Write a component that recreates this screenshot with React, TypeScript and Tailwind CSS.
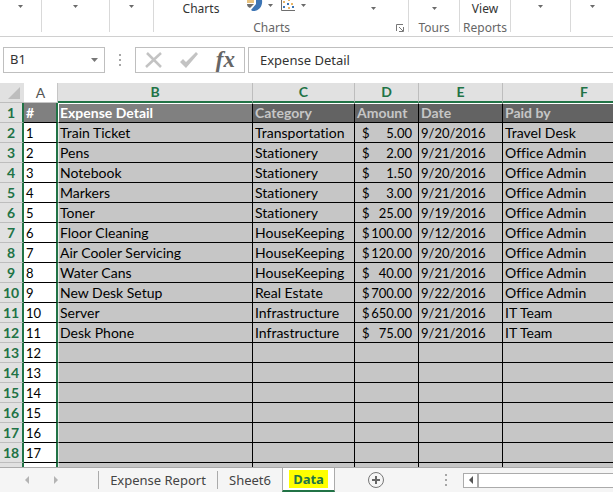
const HEAD = ["A", "B", "C", "D", "E", "F"];

type Row = [string, string, string, string, string];

const ROWS: Row[] = [
  ["Train Ticket", "Transportation", "5.00", "9/20/2016", "Travel Desk"],
  ["Pens", "Stationery", "2.00", "9/21/2016", "Office Admin"],
  ["Notebook", "Stationery", "1.50", "9/20/2016", "Office Admin"],
  ["Markers", "Stationery", "3.00", "9/21/2016", "Office Admin"],
  ["Toner", "Stationery", "25.00", "9/19/2016", "Office Admin"],
  ["Floor Cleaning", "HouseKeeping", "100.00", "9/12/2016", "Office Admin"],
  ["Air Cooler Servicing", "HouseKeeping", "120.00", "9/20/2016", "Office Admin"],
  ["Water Cans", "HouseKeeping", "40.00", "9/21/2016", "Office Admin"],
  ["New Desk Setup", "Real Estate", "700.00", "9/22/2016", "Office Admin"],
  ["Server", "Infrastructure", "650.00", "9/21/2016", "IT Team"],
  ["Desk Phone", "Infrastructure", "75.00", "9/21/2016", "IT Team"],
];

const EMPTY: Row = ["", "", "", "", ""];

// numbered rows below the title row; one blank row follows them
const NUMBERED = 17;

function Caret() {
  return (
    <svg width="5" height="3" viewBox="0 0 5 3" className="shrink-0" aria-hidden="true">
      <path d="M0 0h5L2.5 3z" fill="#6a6a6a" />
    </svg>
  );
}

function Dots() {
  return (
    <svg width="2" height="12" viewBox="0 0 2 12" className="shrink-0" aria-hidden="true">
      <path d="M0 0h2v2H0zM0 5h2v2H0zM0 10h2v2H0z" fill="#a6a6a6" />
    </svg>
  );
}

function CaretGroup({ className }: { className: string }) {
  return (
    <div className={`h-8 shrink-0 border-r border-[#d9d9d9] ${className}`}>
      <button className="flex w-full justify-center pt-[5px]" aria-label="More commands">
        <Caret />
      </button>
    </div>
  );
}

function Ribbon() {
  return (
    <div className="flex h-[37px] shrink-0 overflow-hidden border-b border-[#d0d0d0] text-[12px] leading-4 text-[#666]">
      <CaretGroup className="w-[42px]" />
      <CaretGroup className="w-[68px]" />
      <CaretGroup className="w-11" />
      <div className="flex h-8 w-[255px] shrink-0 flex-col border-r border-[#d9d9d9]">
        <div className="flex h-5 shrink-0 items-start">
          <button className="ml-7 w-[38px] pt-px text-center text-[#333]">Charts</button>
          <button className="ml-[27px] flex gap-[5px]" aria-label="Pie chart">
            <svg width="16" height="12" viewBox="0 0 16 12" aria-hidden="true">
              <path d="M0 0h7v3H0z" fill="#e8c27e" />
              <path d="M0 4h7l-4 4C1 7 0 6 0 4z" fill="#6e6e6e" />
              <path d="M9 0h6c1 6-3 11-8 11-1 0-2 0-3-1l5-6z" fill="#3d75b4" />
            </svg>
            <span className="pt-1"><Caret /></span>
          </button>
          <button className="ml-2 flex gap-[6px]" aria-label="Scatter chart">
            <svg width="14" height="12" viewBox="0 0 14 12" aria-hidden="true">
              <path d="M.5 0v10.500H14" fill="none" stroke="#6e6e6e" />
              <path d="M2 6h2v2H2zM6 3h2v2H6zM11 6h2v2h-2z" fill="#3d75b4" />
              <path d="M2 1h2v2H2zM7 0h2v1H7zM7 7h2v2H7zM10 3h2v2h-2z" fill="#e8b566" />
            </svg>
            <span className="pt-1"><Caret /></span>
          </button>
          <button className="ml-[65px] pt-[7px]" aria-label="PivotChart">
            <Caret />
          </button>
        </div>
        <div className="flex items-center justify-end gap-[106px] pr-1">
          <span>Charts</span>
          <button aria-label="Chart options">
            <svg width="8" height="8" viewBox="0 0 8 8" aria-hidden="true">
              <path d="M.5 7V.5H7M3 3l4 4M7.500 3v4.500H3" fill="none" stroke="#777" />
            </svg>
          </button>
        </div>
      </div>
      <div className="flex h-8 w-[51px] shrink-0 flex-col items-center border-r border-[#d9d9d9]">
        <button className="flex h-5 shrink-0 items-start pt-[7px]" aria-label="Map">
          <Caret />
        </button>
        <span>Tours</span>
      </div>
      <div className="flex h-8 w-[51px] shrink-0 flex-col items-center border-r border-[#d9d9d9]">
        <button className="flex h-5 shrink-0 items-start pt-px text-[#333]">View</button>
        <span>Reports</span>
      </div>
      <CaretGroup className="w-[60px]" />
      <CaretGroup className="w-11" />
    </div>
  );
}

function FormulaBar() {
  return (
    <div className="flex h-[46px] shrink-0 pt-[10px] pl-[3px] text-[13px] text-[#333]">
      <div className="flex h-[26px] w-[102px] shrink-0 items-center border border-[#bfbfbf] pr-[6px]">
        <input aria-label="Name box" defaultValue="B1" className="w-full min-w-0 pl-[6px] outline-none" />
        <button aria-label="Open names">
          <svg width="7" height="4" viewBox="0 0 7 4" aria-hidden="true">
            <path d="M0 0h7L3.500 4z" fill="#777" />
          </svg>
        </button>
      </div>
      <div className="flex h-[26px] w-[30px] shrink-0 items-center justify-center">
        <Dots />
      </div>
      <div className="flex h-[26px] w-[110px] shrink-0 items-center justify-between border border-[#bfbfbf] pr-[9px] pl-[9px]">
        <button aria-label="Cancel">
          <svg width="18" height="16" viewBox="0 0 18 16" aria-hidden="true">
            <path d="M2 1l14 14M16 1L1 15" stroke="#c3c3c3" strokeWidth="2.500" />
          </svg>
        </button>
        <button aria-label="Enter">
          <svg width="20" height="16" viewBox="0 0 20 16" aria-hidden="true">
            <path d="M1 10l6 6L19 2l-2-2L7 10 4 7z" fill="#c3c3c3" />
          </svg>
        </button>
        <button
          aria-label="Insert function"
          className="font-['Liberation_Serif',serif] text-[23px] leading-6 font-bold text-[#666] italic"
        >
          fx
        </button>
      </div>
      <input
        aria-label="Formula"
        defaultValue="Expense Detail"
        className="ml-[3px] h-[26px] min-w-0 flex-1 border border-r-0 border-[#bfbfbf] pl-[11px] outline-none"
      />
    </div>
  );
}

function RowHead({ n }: { n?: number }) {
  return (
    <th className="h-5 border-r-2 border-b border-r-[#217346] border-b-[#bdbdbd] bg-[#e1e1e1] p-0 text-center font-bold text-[#217346]">
      {n}
    </th>
  );
}

function Sheet() {
  const rows = Array.from({ length: NUMBERED + 1 }, (_, i) => ROWS[i] ?? EMPTY);
  const cell = "border-r border-b border-black bg-[#c6c6c6] py-0 pr-0";
  const title = "border-t border-r border-b border-black border-t-white py-0 pr-0 text-left font-bold";

  return (
    <div className="min-h-0 flex-1 overflow-hidden">
      <table className="w-full min-w-[666px] table-fixed border-separate border-spacing-0 font-[Lato,sans-serif] text-[14px] leading-[18px] whitespace-nowrap text-black [font-variant-ligatures:none]">
        <colgroup>
          <col className="w-6" />
          <col className="w-[34px]" />
          <col className="w-[195px]" />
          <col className="w-[102px]" />
          <col className="w-16" />
          <col className="w-[84px]" />
          <col />
        </colgroup>
        <thead>
          <tr>
            <th className="h-5 border-b border-[#bdbdbd] bg-[#e1e1e1] p-0">
              <svg width="12" height="12" viewBox="0 0 12 12" className="ml-2" aria-hidden="true">
                <path d="M12 0v12H0z" fill="#bdbdbd" />
              </svg>
            </th>
            {HEAD.map((h) => (
              <th
                key={h}
                className={
                  h === "A"
                    ? "h-5 border-r border-b border-[#c6c6c6] bg-white p-0 font-normal text-[#555]"
                    : "h-5 border-r border-b-2 border-r-[#bdbdbd] border-b-[#217346] bg-[#e1e1e1] p-0 font-bold text-[#217346]"
                }
              >
                {h}
              </th>
            ))}
          </tr>
        </thead>
        <tbody>
          <tr>
            <RowHead n={1} />
            <th className="border-r-2 border-b border-r-[#217346] border-b-black bg-[#808080] py-0 pr-0 pl-[2px] text-left font-bold text-white">
              #
            </th>
            <th className={`${title} border-l border-l-white bg-[#808080] pl-px text-white`}>Expense Detail</th>
            <th className={`${title} bg-[#636363] pl-[2px] text-[#c6c6c6]`}>Category</th>
            <th className={`${title} bg-[#636363] pl-[2px] text-[#c6c6c6]`}>Amount</th>
            <th className={`${title} bg-[#636363] pl-[2px] text-[#c6c6c6]`}>Date</th>
            <th className={`${title} bg-[#636363] pl-[2px] text-[#c6c6c6]`}>Paid by</th>
          </tr>
          {rows.map(([detail, category, amount, date, paidBy], i) => (
            <tr key={i}>
              <RowHead n={i < NUMBERED ? i + 2 : undefined} />
              <td className="border-r-2 border-b border-r-[#217346] border-b-black bg-white py-0 pr-0 pl-[2px] text-[13px]">
                {i < NUMBERED ? i + 1 : ""}
              </td>
              <td className={`${cell} border-l border-l-[#e8e8e8] pl-px`}>{detail}</td>
              <td className={`${cell} pl-[2px]`}>{category}</td>
              <td className={`${cell} pl-[2px] text-[13px]`}>
                {amount && (
                  <div className="flex justify-between pr-[6px] pl-[5px]">
                    <span>$</span>
                    <span>{amount}</span>
                  </div>
                )}
              </td>
              <td className={`${cell} pl-[2px] text-[13px]`}>{date}</td>
              <td className={`${cell} pl-[2px]`}>{paidBy}</td>
            </tr>
          ))}
        </tbody>
      </table>
    </div>
  );
}

function SheetTabs() {
  return (
    <div className="flex h-[25px] shrink-0 border-t border-[#ababab] bg-[#f5f5f5] text-[13px] text-[#444]">
      <div className="flex w-[98px] shrink-0 items-center gap-[25px] pl-[25px]">
        <button aria-label="Previous sheet">
          <svg width="4" height="8" viewBox="0 0 4 8" aria-hidden="true">
            <path d="M4 0v8L0 4z" fill="#b4b4b4" />
          </svg>
        </button>
        <button aria-label="Next sheet">
          <svg width="4" height="8" viewBox="0 0 4 8" aria-hidden="true">
            <path d="M0 0v8l4-4z" fill="#b4b4b4" />
          </svg>
        </button>
      </div>
      <button className="my-[3px] w-[119px] shrink-0 border-l border-[#ababab]">Expense Report</button>
      <button className="my-[3px] w-[65px] shrink-0 border-l border-[#ababab]">Sheet6</button>
      <button className="w-[53px] shrink-0 border-x border-b-2 border-x-[#ababab] border-b-[#217346] bg-white pt-[2px] font-bold text-[#217346]">
        <span className="bg-[#ffff00] px-[4px]">Data</span>
      </button>
      <button className="ml-8 shrink-0" aria-label="New sheet">
        <svg width="18" height="18" viewBox="0 0 18 18" aria-hidden="true">
          <circle cx="9" cy="9" r="7.500" fill="none" stroke="#777" />
          <path d="M9 5v8M5 9h8" stroke="#666" strokeWidth="2" />
        </svg>
      </button>
      <div className="ml-auto flex w-[168px] shrink-0 items-center gap-4">
        <Dots />
        <div className="flex h-[15px] flex-1 border border-r-0 border-[#ababab] bg-white">
          <button className="flex w-[15px] items-center justify-center border-r-2 border-[#ababab]" aria-label="Scroll left">
            <svg width="4" height="8" viewBox="0 0 4 8" aria-hidden="true">
              <path d="M4 0v8L0 4z" fill="#555" />
            </svg>
          </button>
        </div>
      </div>
    </div>
  );
}

export default function App() {
  return (
    <div className="flex h-screen flex-col overflow-hidden bg-white font-['Noto_Sans',sans-serif]">
      <Ribbon />
      <FormulaBar />
      <Sheet />
      <SheetTabs />
    </div>
  );
}
